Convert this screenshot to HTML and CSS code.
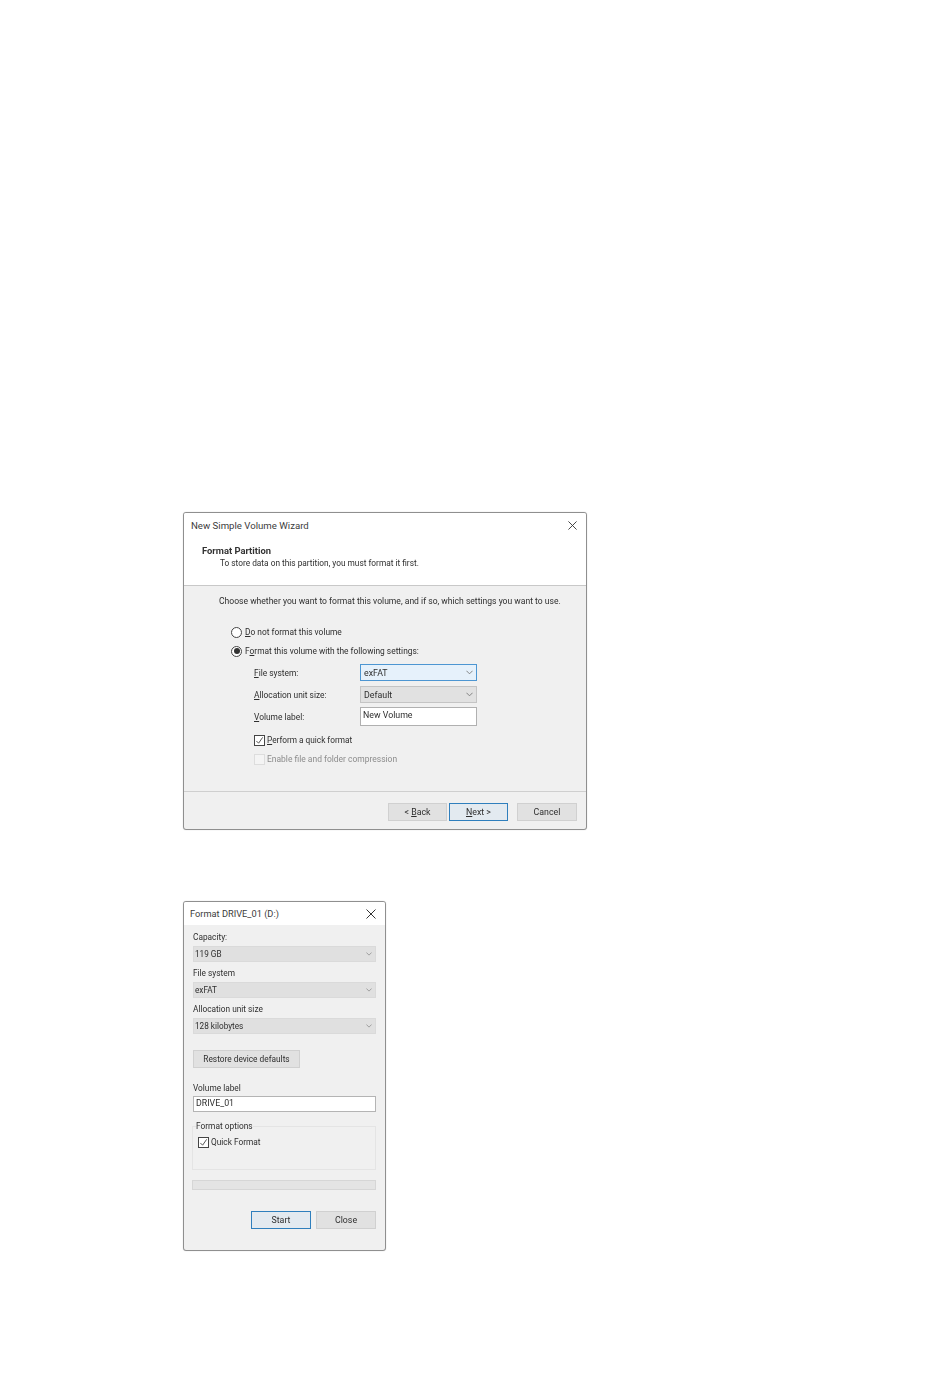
FILE: index.html
```html
<!DOCTYPE html>
<html lang="en">
<head>
<meta charset="utf-8">
<title>Format dialogs</title>
<link rel="stylesheet" href="styles.css">
</head>
<body>
<main class="page">
  <section class="dialog wizard">
    <header class="wiz-head">
      <div class="titlebar">
        <span class="title">New Simple Volume Wizard</span>
        <svg class="close" viewBox="0 0 10 10"><path d="M.5.5l9 9M9.5.5l-9 9"/></svg>
      </div>
      <h1 class="wiz-h1">Format Partition</h1>
      <p class="wiz-sub">To store data on this partition, you must format it first.</p>
    </header>
    <div class="wiz-body">
      <p class="wiz-intro">Choose whether you want to format this volume, and if so, which settings you want to use.</p>
      <div class="choice first"><span class="radio"></span><span><u>D</u>o not format this volume</span></div>
      <div class="choice second"><span class="radio on"></span><span>F<u>o</u>rmat this volume with the following settings:</span></div>
      <div class="wiz-form">
        <div class="row r1"><span class="lab"><u>F</u>ile system:</span>
          <div class="select focus">exFAT<svg class="chev" viewBox="0 0 8 5"><path d="M.5.5L4 4 7.5.5"/></svg></div></div>
        <div class="row r2"><span class="lab"><u>A</u>llocation unit size:</span>
          <div class="select">Default<svg class="chev" viewBox="0 0 8 5"><path d="M.5.5L4 4 7.5.5"/></svg></div></div>
        <div class="row r3"><span class="lab"><u>V</u>olume label:</span>
          <div class="input">New Volume</div></div>
        <div class="check c1"><span class="box"><svg viewBox="0 0 10 10"><path d="M1.5 5.5L4 8l4.5-6.5"/></svg></span><span><u>P</u>erform a quick format</span></div>
        <div class="check c2 off"><span class="box"></span><span>Enable file and folder compression</span></div>
      </div>
    </div>
    <footer class="wiz-foot">
      <button class="btn w59">&lt; <u>B</u>ack</button>
      <button class="btn w59 default"><u>N</u>ext &gt;</button>
      <button class="btn w60 gap">Cancel</button>
    </footer>
  </section>

  <section class="dialog fmt">
    <div class="titlebar fmt-title">
      <span class="title">Format DRIVE_01 (D:)</span>
      <svg class="close big" viewBox="0 0 10 10"><path d="M.5.5l9 9M9.5.5l-9 9"/></svg>
    </div>
    <div class="fmt-body">
      <div class="lab2">Capacity:</div>
      <div class="select s2">119 GB<svg class="chev" viewBox="0 0 8 5"><path d="M.5.5L4 4 7.5.5"/></svg></div>
      <div class="lab2">File system</div>
      <div class="select s2">exFAT<svg class="chev" viewBox="0 0 8 5"><path d="M.5.5L4 4 7.5.5"/></svg></div>
      <div class="lab2">Allocation unit size</div>
      <div class="select s2">128 kilobytes<svg class="chev" viewBox="0 0 8 5"><path d="M.5.5L4 4 7.5.5"/></svg></div>
      <button class="btn restore">Restore device defaults</button>
      <div class="lab2 vol">Volume label</div>
      <div class="input i2">DRIVE_01</div>
      <fieldset class="group">
        <legend class="legend">Format options</legend>
        <div class="check c3"><span class="box"><svg viewBox="0 0 10 10"><path d="M1.5 5.5L4 8l4.5-6.5"/></svg></span><span>Quick Format</span></div>
      </fieldset>
      <div class="progress"></div>
      <div class="fmt-foot">
        <button class="btn w60 default">Start</button>
        <button class="btn w60">Close</button>
      </div>
    </div>
  </section>
</main>
</body>
</html>
```
FILE: styles.css
```css
html, body { margin: 0; padding: 0; background: #fff; }
body { width: 950px; height: 1387px; overflow: hidden; font: 9px/12px Roboto, "Liberation Sans", sans-serif; color: #2e2e2e; }
.page { padding: 512px 0 0 183px; display: flex; flex-direction: column; gap: 71px; align-items: flex-start; filter: blur(.3px); }
.dialog { box-sizing: border-box; border: 1px solid #8f8f8f; border-radius: 3px; background: #f0f0f0; box-shadow: 0 0 1px #bbb; overflow: hidden; }
u { text-underline-offset: 1px; text-decoration-thickness: 1px; }

.wizard { width: 404px; height: 318px; display: flex; flex-direction: column; }
.wiz-head { height: 73px; box-sizing: border-box; background: #fff; border-bottom: 1px solid #c8c8c8; padding: 0 9px 0 7px; flex: none; }
.titlebar { display: flex; justify-content: space-between; align-items: center; height: 25px; }
.title { color: #3c3c3c; font-size: 9.65px; }
.close { width: 9px; height: 9px; fill: none; stroke: #333; stroke-width: 1; }
.close.big { width: 10px; height: 10px; }
.wiz-h1 { margin: 7px 0 0 11px; font-size: 9.4px; line-height: 12px; font-weight: 700; color: #333; }
.wiz-sub { margin: 0 0 0 29px; font-size: 8.3px; line-height: 12px; }

.wiz-body { flex: 1; padding: 9px 0 0 35px; border-bottom: 1px solid #cfcfcf; }
.wiz-intro { margin: 0; font-size: 8.57px; white-space: nowrap; }
.choice { display: flex; align-items: center; gap: 3px; margin-left: 12px; height: 12px; font-size: 8.4px; }
.choice.first { margin-top: 19px; }
.choice.second { margin-top: 7px; }
.radio { box-sizing: border-box; width: 11px; height: 11px; border: 1px solid #444; border-radius: 50%; background: #fff; position: relative; flex: none; }
.radio.on::after { content: ""; position: absolute; inset: 1.5px; border-radius: 50%; background: #333; }
.wiz-form { margin: 7px 0 0 35px; }
.row { display: flex; align-items: center; }
.r1 { height: 17px; }
.r2 { height: 17px; margin-top: 5px; }
.r3 { height: 19px; margin-top: 4px; }
.lab { width: 106px; flex: none; font-size: 8.4px; }
.select { box-sizing: border-box; display: flex; justify-content: space-between; align-items: center; width: 117px; height: 17px; padding: 0 3px 0 3px; background: #e1e1e1; border: 1px solid #c4c4c4; font-size: 8.8px; }
.select.focus { background: #e6f1fb; border-color: #4d96d2; }
.chev { width: 7px; height: 5px; fill: none; stroke: #777; stroke-width: 1; }
.input { box-sizing: border-box; width: 117px; height: 19px; padding: 1px 2px 3px; background: #fff; border: 1px solid #b0b0b0; font-size: 8.8px; }
.check { display: flex; align-items: center; gap: 2px; height: 12px; font-size: 8.4px; }
.c1 { margin-top: 8px; font-size: 8.25px; }
.c2 { margin-top: 7px; color: #8c8c8c; font-size: 8.47px; }
.box { box-sizing: border-box; display: block; width: 11px; height: 11px; border: 1px solid #444; background: #fff; flex: none; }
.box svg { display: block; width: 9px; height: 9px; fill: none; stroke: #444; stroke-width: 1; }
.off .box { border-color: #ddd; background: #f4f4f4; }

.wiz-foot { height: 37px; flex: none; display: flex; gap: 2px; justify-content: flex-end; padding: 11px 9px 0 0; box-sizing: border-box; }
.btn { box-sizing: border-box; height: 18px; padding: 0; background: #e1e1e1; border: 1px solid #d0d0d0; color: #2e2e2e; font: 8.8px/12px Roboto, "Liberation Sans", sans-serif; }
.btn.default { background: #e3eaf0; border-color: #2f7fbd; }
.w59 { width: 59px; }
.w60 { width: 60px; }
.gap { margin-left: 7px; }

.fmt { width: 203px; height: 350px; }
.fmt-title { background: #fff; height: 23px; padding: 0 9px 0 6px; }
.fmt-title .title { font-size: 9.25px; }
.fmt-body { padding: 6px 9px 0 9px; }
.lab2 { height: 12px; font-size: 8.3px; line-height: 12px; }
.s2 { width: 183px; height: 16px; margin: 3px 0 5px; padding: 0 3px 0 1px; border-color: #dadada; background: #e0e0e0; font-size: 8.2px; }
.s2 .chev { width: 6px; height: 4px; stroke: #8a8a8a; }
.restore { display: block; width: 107px; margin-top: 16px; font-size: 8.3px; }
.vol { margin-top: 14px; }
.i2 { width: 183px; height: 16px; margin-top: 2px; padding: 0 2px; line-height: 13px; border-color: #b4b4b4; }
.group { box-sizing: border-box; width: 184px; height: 49px; margin: 9px 0 0 -1px; padding: 0 5px; border: 1px solid #e4e4e4; min-width: 0; }
.legend { padding: 0; margin-left: -2px; font-size: 8.35px; line-height: 10px; }
.c3 { gap: 2px; margin-top: 5px; font-size: 8.3px; }
.progress { box-sizing: border-box; width: 184px; height: 10px; margin: 10px 0 0 -1px; background: #e4e4e4; border: 1px solid #d6d6d6; }
.fmt-foot { display: flex; justify-content: flex-end; gap: 5px; margin-top: 21px; }
```
